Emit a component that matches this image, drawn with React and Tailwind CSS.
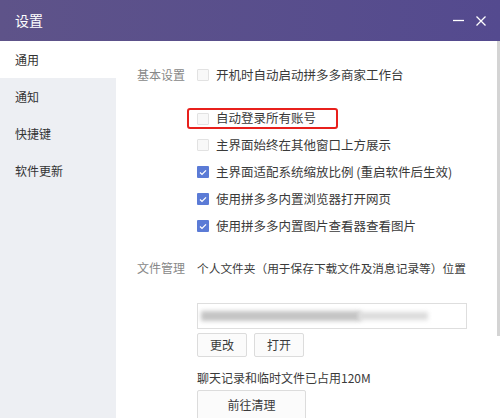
import React from 'react';

const font = { fontFamily: '"Noto Sans CJK SC", "Noto Sans", sans-serif' };

const Check = ({ checked }) =>
    checked ? (
        <span className="w-[12px] h-[12px] bg-[#5b7bd6] flex items-center justify-center shrink-0 rounded-[1px]">
            <svg width="8" height="7" viewBox="0 0 8 7" fill="none">
                <path d="M1 3.6 L3 5.4 L7 1.4" stroke="#fff" strokeWidth="1.3" />
            </svg>
        </span>
    ) : (
        <span className="w-[12px] h-[12px] border border-[#e2e2e2] bg-[#f8f8f8] shrink-0 rounded-[1px]" />
    );

const Option = ({ checked, label }) => (
    <div className="h-[20px] flex items-center gap-[7px]">
        <Check checked={checked} />
        <span className="text-[12.5px] text-[#3a3a3a]">{label}</span>
    </div>
);

const Btn = ({ children, w }) => (
    <button className={`${w} border border-[#dcdcdc] bg-[#fbfbfb] text-[12px] text-[#3a3a3a] rounded-[2px] flex items-center justify-center`}>
        {children}
    </button>
);

const App = () => {
    const menu = ['通用', '通知', '快捷键', '软件更新'];

    return (
        <div className="w-[500px] h-[418px] overflow-hidden flex flex-col bg-white" style={font}>
            {/* title bar */}
            <div className="h-[41px] shrink-0 bg-gradient-to-r from-[#5e5389] to-[#544a8f] flex items-center pl-[15px] pr-[14px]">
                <span className="text-white text-[14px]">设置</span>
                <div className="ml-auto flex items-center gap-[12px]">
                    <svg width="11" height="11" viewBox="0 0 11 11">
                        <path d="M0 5.5 H11" stroke="#fff" strokeWidth="1.3" />
                    </svg>
                    <svg width="10" height="10" viewBox="0 0 10 10">
                        <path d="M0.5 0.5 L9.5 9.5 M9.5 0.5 L0.5 9.5" stroke="#fff" strokeWidth="1.3" />
                    </svg>
                </div>
            </div>

            <div className="flex-1 flex min-h-0">
                {/* sidebar */}
                <div className="w-[116px] bg-[#edeff3] shrink-0">
                    {menu.map((m, i) => (
                        <div key={m} className={`h-[37px] flex items-center pl-[15px] text-[12px] text-[#333] ${i === 0 ? 'bg-white' : ''}`}>
                            {m}
                        </div>
                    ))}
                </div>

                {/* content */}
                <div className="flex-1 pl-[21px] pt-[24px]">
                    <div className="flex">
                        <div className="w-[60px] h-[20px] flex items-center text-[12px] text-[#888]">基本设置</div>
                        <div className="flex flex-col">
                            <Option checked={false} label="开机时自动启动拼多多商家工作台" />
                            <div className="mt-[23px] -ml-[10px] w-[151px] h-[21px] border-2 border-[#e8201c] rounded-[3px] pl-[8px] flex items-center gap-[7px]">
                                <Check checked={false} />
                                <span className="text-[12.5px] text-[#3a3a3a]">自动登录所有账号</span>
                            </div>
                            <div className="mt-[6px] flex flex-col gap-[7px]">
                                <Option checked={false} label="主界面始终在其他窗口上方展示" />
                                <Option checked label="主界面适配系统缩放比例 (重启软件后生效)" />
                                <Option checked label="使用拼多多内置浏览器打开网页" />
                                <Option checked label="使用拼多多内置图片查看器查看图片" />
                            </div>
                        </div>
                    </div>

                    <div className="flex mt-[22px]">
                        <div className="w-[60px] h-[20px] flex items-center text-[12px] text-[#888]">文件管理</div>
                        <div className="flex flex-col">
                            <div className="h-[20px] flex items-center text-[11.7px] text-[#3a3a3a]">个人文件夹（用于保存下载文件及消息记录等）位置</div>
                            <div className="mt-[25px] w-[270px] h-[26px] border border-[#dedede] relative overflow-hidden">
                                <div className="absolute -top-[3px] left-[2px] w-[220px] h-[8px] bg-white blur-[2px]" />
                                <div className="absolute top-[7px] left-[3px] w-[160px] h-[10px] bg-[#c4c4c4] blur-[2px]" />
                                <div className="absolute top-[8px] left-[160px] w-[70px] h-[8px] bg-[#dcdcdc] blur-[2px]" />
                            </div>
                            <div className="mt-[4px] flex gap-[7px] h-[24px]">
                                <Btn w="w-[50px]">更改</Btn>
                                <Btn w="w-[50px]">打开</Btn>
                            </div>
                            <div className="mt-[11px] h-[20px] flex items-center text-[12px] text-[#3a3a3a]">聊天记录和临时文件已占用120M</div>
                            <div className="mt-[2px] flex h-[30px]">
                                <Btn w="w-[109px]">前往清理</Btn>
                            </div>
                        </div>
                    </div>
                </div>

                {/* scrollbar */}
                <div className="w-[4px] shrink-0">
                    <div className="ml-auto w-[3px] h-[295px] bg-[#d4d4d4]" />
                </div>
            </div>
        </div>
    );
};

export default App;
